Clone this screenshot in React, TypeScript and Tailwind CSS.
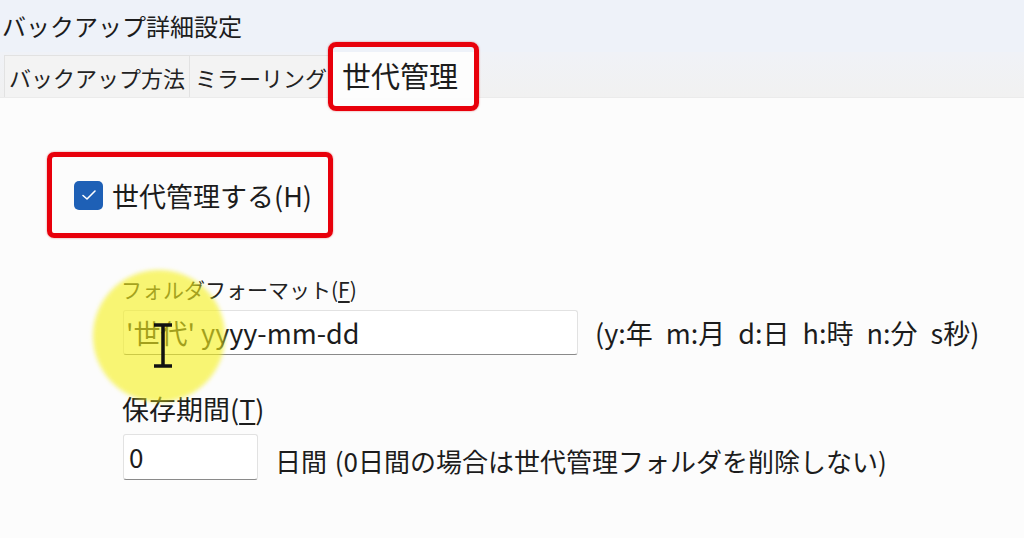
import React from "react";

const font = { fontFamily: '"Noto Sans CJK JP", "Noto Sans", sans-serif' };

export default function App() {
  return (
    <div
      className="relative w-[1024px] h-[538px] overflow-hidden bg-[#fcfcfc] text-[#1c1c1c]"
      style={font}
    >
      {/* title bar */}
      <div className="h-[52px] bg-[#eef2f9] flex items-center pl-[2px] text-[24px] leading-none">
        バックアップ詳細設定
      </div>
      {/* tabs row */}
      <div className="h-[46px] bg-gradient-to-b from-[#f0f2f7] to-[#f1f1f1] flex items-end pl-[4px] border-b border-[#ebebeb]">
        <div className="h-[42px] px-[4px] flex items-center text-[22px] leading-none border-l border-r border-t border-[#e2e2e2] bg-[#f3f3f3] text-[#222]">
          バックアップ方法
        </div>
        <div className="h-[42px] pl-[5px] pr-[1px] flex items-center text-[22px] leading-none border-t border-[#e2e2e2] bg-[#f3f3f3] text-[#222]">
          ミラーリング
        </div>
        <div className="relative h-[46px] w-[151px] flex items-center pl-[14px] text-[29px] leading-none bg-[#fdfdfd] -mb-px">
          世代管理
          <div className="absolute left-0 right-0 top-[-10px] bottom-[-13px] border-[5px] border-[#e8000b] rounded-[8px] shadow-[0_0_2px_rgba(200,0,0,0.5)]" />
        </div>
      </div>

      {/* content */}
      <div className="pt-[54px] pl-[47px]">
        <div className="w-[286px] h-[86px] border-[5px] border-[#e8000b] rounded-[7px] flex items-center pl-[22px] gap-[9px] shadow-[0_0_2px_rgba(200,0,0,0.5)]">
          <div className="w-[29px] h-[29px] rounded-[5px] bg-[#1e60b6] flex items-center justify-center">
            <svg width="16" height="12" viewBox="0 0 16 12" fill="none">
              <path d="M2 6.5 L6 10 L14 2" stroke="white" strokeWidth="1.6" strokeLinecap="round" strokeLinejoin="round" />
            </svg>
          </div>
          <span className="text-[27px] leading-none">世代管理する(H)</span>
        </div>

        <div className="pl-[76px] pt-[41px]">
          <div className="-ml-[2px] text-[21px] leading-none text-[#222]">
            フォルダフォーマット(<span className="underline underline-offset-[3px]">F</span>)
          </div>
          <div className="flex items-center mt-[10px]">
            <div className="w-[455px] h-[45px] bg-white border border-[#e2e2e2] border-b-[#8a8a8a] rounded-[3px] flex items-center pl-[2px] text-[27px] leading-none">
              &apos;世代&apos; yyyy-mm-dd
            </div>
            <div className="ml-[17px] text-[27px] leading-none [word-spacing:7px]">
              (y:年 m:月 d:日 h:時 n:分 s秒)
            </div>
          </div>

          <div className="-ml-[1px] mt-[40px] text-[27px] leading-none">
            保存期間(<span className="underline underline-offset-[3px]">T</span>)
          </div>
          <div className="flex items-center mt-[12px]">
            <div className="w-[135px] h-[46px] bg-white border border-[#e2e2e2] border-b-[#8a8a8a] rounded-[3px] flex items-center pl-[5px] text-[26px] leading-none">
              0
            </div>
            <div className="ml-[17px] mt-[8px] text-[26px] leading-none [word-spacing:2px]">
              日間 (0日間の場合は世代管理フォルダを削除しない)
            </div>
          </div>
        </div>
      </div>

      {/* cursor highlight overlay */}
      <div className="absolute left-[93px] top-[270px] w-[132px] h-[132px] rounded-full bg-[rgba(246,240,30,0.62)] blur-[2px] pointer-events-none" />
      <svg className="absolute left-[150px] top-[323px] pointer-events-none" width="26" height="46" viewBox="0 0 26 46">
        <path d="M4 2 H22 M13 2 V43 M4 43 H22" stroke="#111" strokeWidth="3.5" fill="none" />
      </svg>
    </div>
  );
}
